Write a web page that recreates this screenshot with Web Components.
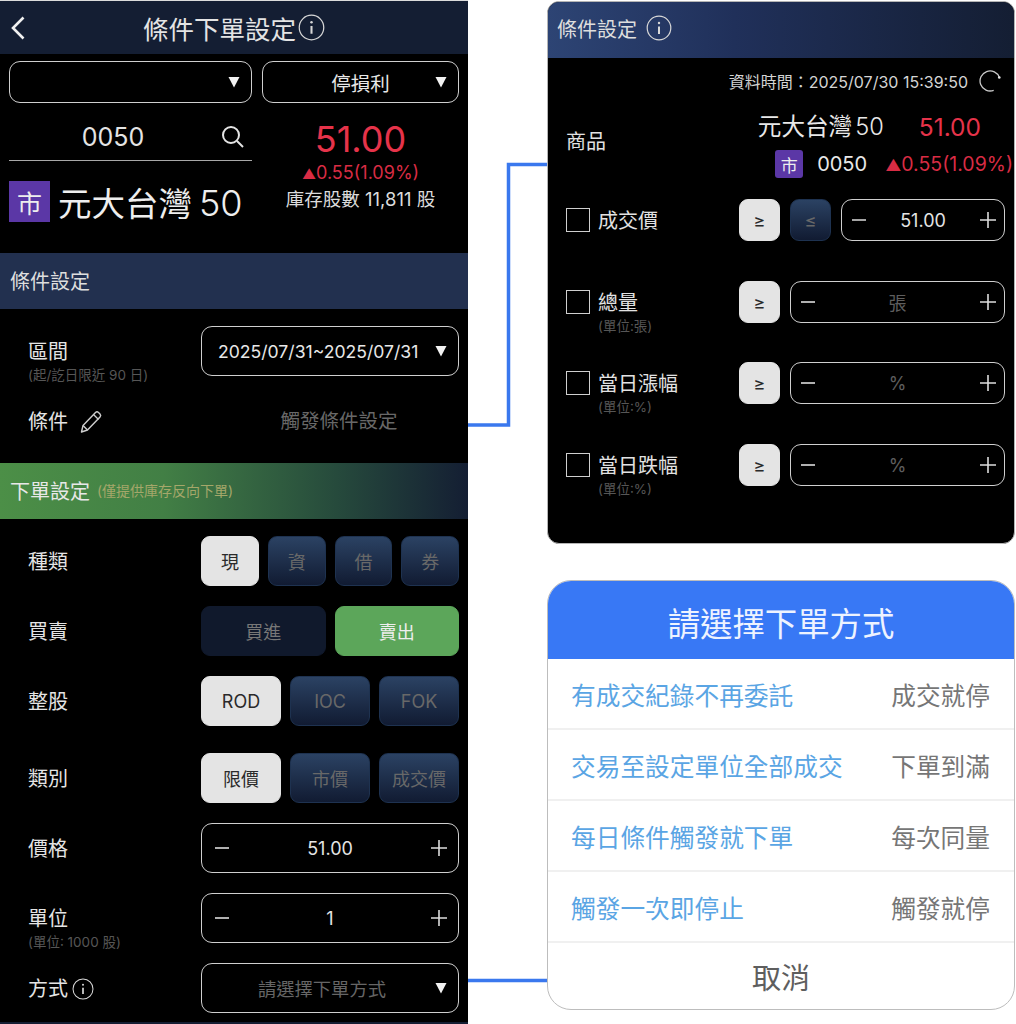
<!DOCTYPE html>
<html lang="zh-Hant">
<head>
<meta charset="utf-8">
<title>條件下單設定</title>
<style>
  html, body { margin: 0; background: #fff; }
  body { font-family: Inter, "Noto Sans CJK TC", sans-serif; color: #e4e4e4; }
</style>
</head>
<body>
<demo-page></demo-page>
<script>
// small helper, every element is just css + markup in an open shadow root
function def(name, css, html) {
  customElements.define(name, class extends HTMLElement {
    constructor() {
      super();
      this.attachShadow({ mode: 'open' }).innerHTML = `<style>${css}</style>${html}`;
    }
  });
}

const minus = `<svg width="14" height="14" viewBox="0 0 14 14"><path d="M0 7h14" stroke="#ddd" stroke-width="1.6"/></svg>`;
const plus = `<svg width="16" height="16" viewBox="0 0 16 16"><path d="M0 8h16M8 0v16" stroke="#ddd" stroke-width="1.6"/></svg>`;

def('info-icon', `
  :host { display: inline-flex; flex: none; }
  svg { width: var(--size, 27px); height: var(--size, 27px); }
`, `<svg viewBox="0 0 26 26" fill="none" stroke="#d8d8d8">
  <circle cx="13" cy="13" r="11.8" stroke-width="1.2"/>
  <path d="M13 11.5v7.5" stroke-width="2"/>
  <circle cx="13" cy="8" r="1.2" fill="#d8d8d8" stroke="none"/>
</svg>`);

def('market-tag', `
  :host {
    display: flex; align-items: center; justify-content: center;
    width: var(--tag, 41px); height: var(--tag, 41px);
    background: #5b37a6; color: #eee; border-radius: var(--tag-r, 0);
    font-size: var(--tag-font, 25px); flex: none;
  }
`, `市`);

def('pill-select', `
  :host {
    display: flex; align-items: center; box-sizing: border-box;
    height: var(--h, 42px); border: 1.5px solid #cfcfcf; border-radius: 11px;
    padding: 0 11px 0 var(--pad, 23px); font-size: 19.5px; color: #e8e8e8; background: #000;
  }
  .txt { flex: 1; text-align: var(--align, center); white-space: nowrap; min-width: 0; }
  svg { flex: none; width: 12px; height: 12px; }
`, `<div class="txt"><slot></slot></div>
<svg viewBox="0 0 12 12"><path d="M0.5 1h11L6 11.5z" fill="#f2f2f2"/></svg>`);

def('section-bar', `
  :host {
    display: flex; align-items: center; gap: 7px; height: 56px; box-sizing: border-box;
    padding: 0 0 2px 10px; font-size: 20px; color: #dedede; background: #22304f;
  }
  :host([green]) { background: linear-gradient(90deg, #4c8f47 0%, #427f45 35%, #264a3c 72%, #141e33 100%); color: #e8e8e8; }
  ::slotted([slot=note]) { font-size: 14px; color: #a5a76a; }
`, `<slot></slot><slot name="note"></slot>`);

def('form-row', `
  :host {
    display: grid; grid-template-columns: 173px 258px; grid-template-rows: var(--h, 50px); padding-left: 28px;
    height: var(--h, 50px); margin-top: var(--top, 20px);
  }
  .lab { font-size: 20px; line-height: var(--h, 50px); color: #e4e4e4; display: flex; align-items: center; gap: var(--lab-gap, 4px); height: var(--h, 50px); padding-top: 1px; box-sizing: border-box; }
  .sub { font-size: 13.5px; line-height: 16px; margin-top: -9px; color: #565656; white-space: nowrap; }
  .ctl { min-width: 0; height: var(--h, 50px); }
`, `<div>
  <div class="lab"><slot name="label"></slot></div>
  <div class="sub"><slot name="sub"></slot></div>
</div>
<div class="ctl"><slot></slot></div>`);

def('seg-group', `
  :host { display: flex; gap: 9px; height: 100%; }
  ::slotted(seg-btn) { flex: 1 1 0; }
`, `<slot></slot>`);

def('seg-btn', `
  :host {
    display: flex; align-items: center; justify-content: center; box-sizing: border-box;
    border-radius: 9px; font-size: 18px; color: #686868; min-width: 0;
    background: linear-gradient(180deg, #2b4263 0%, #111b32 100%);
    border: 1px solid #1e3250;
  }
  :host([on]) { background: #e4e4e4; border-color: #e4e4e4; color: #2a2a2a; }
  :host([dim]) { background: #10192c; border-color: #10192c; color: #777; }
  :host([sell]) { background: #5ca65a; border-color: #5ca65a; color: #eee; }
`, `<slot></slot>`);

def('step-field', `
  :host {
    display: flex; align-items: center; justify-content: space-between; box-sizing: border-box;
    height: 100%; border: 1.5px solid #cfcfcf; border-radius: 11px;
    padding: 0 var(--step-r, 11px) 0 var(--step-l, 13px); font-size: 18px; color: #e4e4e4;
  }
  :host([empty]) { color: #5e5e5e; }
  span { flex: 1; text-align: center; }
  svg { display: block; flex: none; }
`, `${minus}<span><slot></slot></span>${plus}`);

def('order-panel', `
  :host { display: block; width: 468px; height: 1024px; background: #000; flex: none; overflow: hidden; }
  .top {
    display: flex; align-items: center; justify-content: center; height: 54px; box-sizing: border-box; position: relative;
    border-top: 1px solid #dcdcdc; background: #141e33; font-size: 25.5px; color: #e4e4e4; gap: 2px;
  }
  .back { position: absolute; left: 11px; top: 15px; }
  .selects { display: grid; grid-template-columns: 243px 197px; gap: 10px; padding: 7px 9px 0; }
  .quote { display: grid; grid-template-columns: 243px 197px; gap: 10px; padding: 0 9px; height: 150px; }
  .search {
    display: flex; align-items: center; height: 47px; padding: 10px 35px 0 0; border-bottom: 1.5px solid #a8a8a8;
    font-size: 25px; position: relative; justify-content: center;
  }
  .search svg { position: absolute; right: 8px; top: 22px; }
  .name { display: flex; align-items: center; gap: 8px; margin-top: 16px; font-size: 33.5px; color: #eee; white-space: nowrap; }
  .name b { font-weight: 300; font-size: 36px; margin-left: 7px; }
  .px { text-align: center; color: #e6334a; font-size: 36px; line-height: 44px; margin-top: 14px; }
  .chg { text-align: center; color: #d92c44; font-size: 18px; line-height: 22px; margin-top: 1px; white-space: nowrap; }
  .chg i { font-style: normal; font-size: 14px; }
  .inv { text-align: center; color: #dcdcdc; font-size: 18.5px; line-height: 24px; margin-top: 2px; white-space: nowrap; }
  .cond { color: #686868; font-size: 19.5px; text-align: center; line-height: 50px; padding-left: 18px; }
  .ph { color: #666; font-size: 18.3px; }
  .date { font-size: 17.6px; }
  .foot { height: 2px; margin-top: 9px; background: #141e33; }
`, `
<div class="top">
  <svg class="back" width="14" height="24" viewBox="0 0 14 24" fill="none"><path d="M12.5 1.5 2 12l10.5 10.5" stroke="#f0f0f0" stroke-width="2.6"/></svg>
  條件下單設定<info-icon></info-icon>
</div>
<div class="selects">
  <pill-select></pill-select>
  <pill-select>停損利</pill-select>
</div>
<div class="quote">
  <div>
    <div class="search">0050
      <svg width="23" height="23" viewBox="0 0 23 23" fill="none" stroke="#e4e4e4" stroke-width="2"><circle cx="10" cy="10" r="8"/><path d="m16 16 6 6"/></svg>
    </div>
    <div class="name"><market-tag></market-tag><span>元大台灣<b>50</b></span></div>
  </div>
  <div>
    <div class="px">51.00</div>
    <div class="chg"><i>▲</i>0.55(1.09%)</div>
    <div class="inv">庫存股數 11,811 股</div>
  </div>
</div>
<section-bar>條件設定</section-bar>
<form-row style="--top:17px">
  <span slot="label">區間</span><span slot="sub">(起/訖日限近 90 日)</span>
  <pill-select style="--h:50px;--pad:16px;--align:left"><span class="date">2025/07/31~2025/07/31</span></pill-select>
</form-row>
<form-row>
  <span slot="label">條件</span>
  <svg slot="label" style="margin-left:7px" width="24" height="24" viewBox="0 0 24 24" fill="none" stroke="#cfcfcf" stroke-width="1.4" stroke-linejoin="round"><path d="M2.5 22 4 15.5 16.5 2.5a2.2 2.2 0 0 1 3 0l1.5 1.5a2.2 2.2 0 0 1 0 3L8.500 20z"/><path d="m4 15.500 4.500 4.500M14.500 4.500l5 5"/></svg>
  <div class="cond">觸發條件設定</div>
</form-row>
<section-bar green style="margin-top:17px">下單設定<span slot="note">(僅提供庫存反向下單)</span></section-bar>
<form-row style="--top:17px">
  <span slot="label">種類</span>
  <seg-group><seg-btn on>現</seg-btn><seg-btn>資</seg-btn><seg-btn>借</seg-btn><seg-btn>券</seg-btn></seg-group>
</form-row>
<form-row>
  <span slot="label">買賣</span>
  <seg-group><seg-btn dim>買進</seg-btn><seg-btn sell>賣出</seg-btn></seg-group>
</form-row>
<form-row>
  <span slot="label">整股</span>
  <seg-group><seg-btn on>ROD</seg-btn><seg-btn>IOC</seg-btn><seg-btn>FOK</seg-btn></seg-group>
</form-row>
<form-row style="--top:27px">
  <span slot="label">類別</span>
  <seg-group><seg-btn on>限價</seg-btn><seg-btn>市價</seg-btn><seg-btn>成交價</seg-btn></seg-group>
</form-row>
<form-row>
  <span slot="label">價格</span>
  <step-field>51.00</step-field>
</form-row>
<form-row>
  <span slot="label">單位</span><span slot="sub">(單位: 1000 股)</span>
  <step-field>1</step-field>
</form-row>
<form-row>
  <span slot="label">方式</span><info-icon slot="label" style="--size:22px"></info-icon>
  <pill-select style="--h:50px;--pad:56px;--align:left"><span class="ph">請選擇下單方式</span></pill-select>
</form-row>
<div class="foot"></div>
`);

def('cond-row', `
  :host {
    display: flex; align-items: flex-start; height: 42px; margin-top: var(--top, 40px);
    padding: 0 9px 0 18px; --step-l: 10px; --step-r: 8px;
  }
  .box { width: 24px; height: 24px; box-sizing: border-box; border: 1.5px solid #cfcfcf; margin-top: 9px; flex: none; }
  .txt { width: 141px; margin-left: 8px; flex: none; }
  .lab { font-size: 20px; line-height: 44px; color: #e2e2e2; white-space: nowrap; }
  .sub { font-size: 13.5px; line-height: 14px; color: #565656; margin-top: -6px; }
  .ctl { flex: 1; display: flex; gap: 10px; height: 42px; min-width: 0; }
  ::slotted(seg-btn) { width: 41px; flex: none; font-size: 18px; }
  ::slotted(step-field) { flex: 1; min-width: 0; }
`, `<div class="box"></div>
<div class="txt">
  <div class="lab"><slot name="label"></slot></div>
  <div class="sub"><slot name="sub"></slot></div>
</div>
<div class="ctl"><slot></slot></div>`);

def('cond-panel', `
  :host {
    display: block; box-sizing: border-box; height: 543px; background: #000;
    border: 1px solid #b5b5b5; border-radius: 12px; overflow: hidden;
  }
  .top {
    display: flex; align-items: center; gap: 9px; height: 56px; padding: 0 0 4px 9px; box-sizing: border-box;
    background: linear-gradient(90deg, #2d4474 0%, #20305a 40%, #141e33 100%);
    font-size: 20px; color: #dedede;
  }
  .time {
    display: flex; align-items: center; justify-content: flex-end; gap: 11px; height: 24px;
    margin-top: 11px; padding-right: 13px; font-size: 16px; color: #d4d4d4; white-space: nowrap;
  }
  .quote { display: flex; margin-top: 20px; height: 65px; padding-left: 18px; }
  .quote .lab { font-size: 20px; line-height: 58px; color: #e2e2e2; width: 80px; flex: none; }
  .lines { flex: 1; min-width: 0; }
  .l1 { display: flex; justify-content: flex-end; align-items: center; gap: 35px; height: 28px; padding-right: 33px; font-size: 23.6px; color: #e8e8e8; white-space: nowrap; }
  .l1 span { margin-bottom: 4px; }
  .l1 b { font-weight: 300; margin-left: 3px; }
  .l1 em { font-style: normal; color: #e6334a; font-size: 24.5px; }
  .l2 { display: flex; justify-content: flex-end; align-items: center; height: 28px; margin-top: 9px; padding-right: 1px; font-size: 20px; white-space: nowrap; color: #e8e8e8; }
  .l2 em { font-style: normal; color: #d92c44; font-size: 19.5px; margin-left: 18px; }
  .l2 em i { font-style: normal; font-size: 16px; }
  .l2 span { margin-left: 14px; }
  market-tag { --tag: 28px; --tag-r: 3px; --tag-font: 17px; }
  info-icon { --size: 26px; }
`, `
<div class="top">條件設定<info-icon></info-icon></div>
<div class="time">資料時間：2025/07/30 15:39:50
  <svg width="22" height="22" viewBox="0 0 22 22" fill="none" stroke="#c8c8c8" stroke-width="1.3"><path d="M20.500 7.700A10 10 0 1 0 14.700 20.300"/><circle cx="20.300" cy="7.500" r="1.300" fill="#e8e8e8" stroke="none"/></svg>
</div>
<div class="quote">
  <div class="lab">商品</div>
  <div class="lines">
    <div class="l1"><span>元大台灣<b>50</b></span><em>51.00</em></div>
    <div class="l2"><market-tag></market-tag><span>0050</span><em><i>▲</i>0.55(1.09%)</em></div>
  </div>
</div>
<cond-row style="--top:21px">
  <span slot="label">成交價</span>
  <seg-btn on>≥</seg-btn><seg-btn>≤</seg-btn><step-field>51.00</step-field>
</cond-row>
<cond-row>
  <span slot="label">總量</span><span slot="sub">(單位:張)</span>
  <seg-btn on>≥</seg-btn><step-field empty>張</step-field>
</cond-row>
<cond-row style="--top:39px">
  <span slot="label">當日漲幅</span><span slot="sub">(單位:%)</span>
  <seg-btn on>≥</seg-btn><step-field empty>%</step-field>
</cond-row>
<cond-row>
  <span slot="label">當日跌幅</span><span slot="sub">(單位:%)</span>
  <seg-btn on>≥</seg-btn><step-field empty>%</step-field>
</cond-row>
`);

def('sheet-row', `
  :host {
    display: flex; align-items: center; justify-content: space-between; height: 71px; box-sizing: border-box;
    padding: 0 24px 0 23px; border-bottom: 2px solid #f0f0f0; font-size: 24.7px; color: #5aa5e4; white-space: nowrap;
  }
  ::slotted([slot=tag]) { color: #767676; }
`, `<slot></slot><slot name="tag"></slot>`);

def('method-sheet', `
  :host {
    display: block; box-sizing: border-box; height: 430px; background: #fff;
    border: 1px solid #bdbdbd; border-radius: 24px; overflow: hidden;
  }
  .top {
    display: flex; align-items: center; justify-content: center; height: 78px; padding-top: 3px; box-sizing: border-box;
    background: #3878f5; color: #eef3ff; font-size: 32.4px;
  }
  .cancel { display: flex; align-items: center; justify-content: center; height: 66px; font-size: 29px; color: #5e5e5e; }
`, `
<div class="top">請選擇下單方式</div>
<sheet-row>有成交紀錄不再委託<span slot="tag">成交就停</span></sheet-row>
<sheet-row>交易至設定單位全部成交<span slot="tag">下單到滿</span></sheet-row>
<sheet-row>每日條件觸發就下單<span slot="tag">每次同量</span></sheet-row>
<sheet-row>觸發一次即停止<span slot="tag">觸發就停</span></sheet-row>
<div class="cancel">取消</div>
`);

def('demo-page', `
  :host { display: flex; gap: 79px; width: 1016px; height: 1024px; position: relative; overflow: hidden; background: #fff; }
  .side { width: 468px; flex: none; display: flex; flex-direction: column; gap: 36px; padding-top: 1px; }
  .wire { position: absolute; left: 0; top: 0; pointer-events: none; }
`, `
<order-panel></order-panel>
<div class="side">
  <cond-panel></cond-panel>
  <method-sheet></method-sheet>
</div>
<svg class="wire" width="1016" height="1024" fill="none" stroke="#3a78ee" stroke-width="3.500">
  <path d="M468 425H508.500V164.500H547"/>
  <path d="M468 980.500H547"/>
</svg>
`);
</script>
</body>
</html>
